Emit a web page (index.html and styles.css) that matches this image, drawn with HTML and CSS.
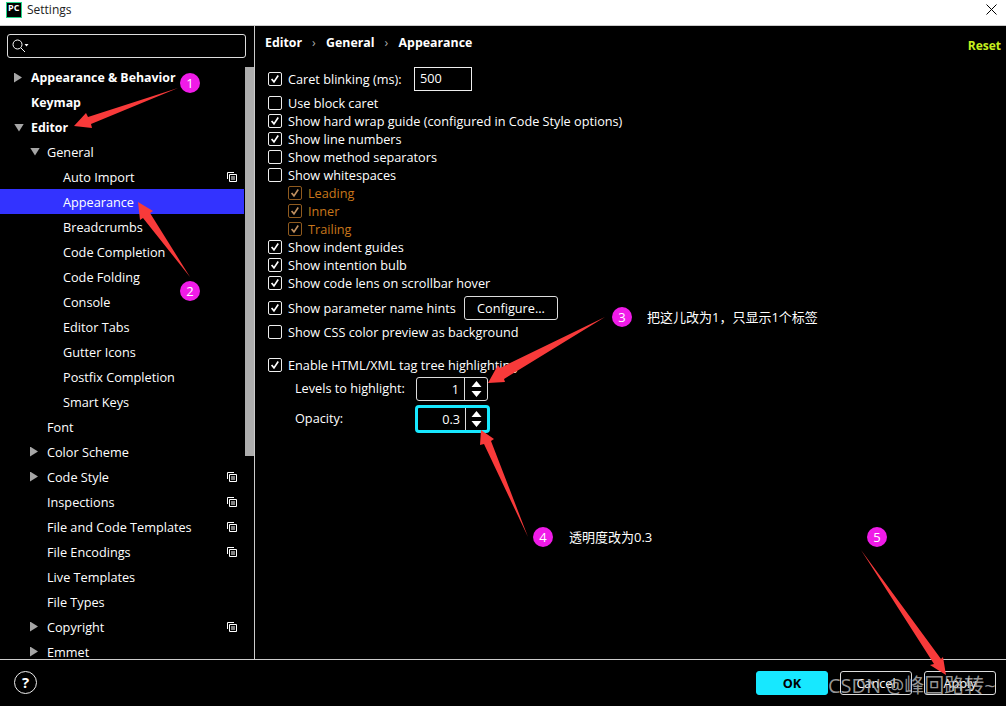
FILE: index.html
```html
<!DOCTYPE html>
<html lang="en">
<head>
  <meta charset="UTF-8" />
  <title>Settings</title>
  <link rel="stylesheet" href="styles.css">
</head>
<body>
  <svg class="defs" xmlns="http://www.w3.org/2000/svg">
    <symbol id="check" viewBox="0 0 13 13">
      <path d="M2.8 6.4 5.4 9.6 10 2.8" fill="none" stroke="currentColor" stroke-width="1.8"/>
    </symbol>
    <symbol id="project" viewBox="0 0 10 10">
      <path d="M.5 7V.5H7" fill="none" stroke="#fff"/>
      <path d="M2.5 2.5h7v7h-7zM4 5h4M4 7h4" fill="none" stroke="#fff"/>
    </symbol>
    <symbol id="updown" viewBox="0 0 11 16">
      <path d="M5.5 0 10.5 6H.5zM.5 10h10l-5 6z" fill="#fff"/>
    </symbol>
  </svg>

  <div class="window">
    <div class="titlebar">
      <div class="title-left">
        <div class="pc-logo"><span>PC</span></div>
        <span class="title-text">Settings</span>
      </div>
      <svg class="close" viewBox="0 0 11 11"><path d="M.5.5l10 10M10.5.5l-10 10" stroke="#000" fill="none"/></svg>
    </div>

    <div class="main">
      <div class="sidebar">
        <div class="tree-col">
          <div class="search">
            <svg class="search-icon" viewBox="0 0 17 14">
              <circle cx="5.5" cy="5.5" r="4.5" fill="none" stroke="#fff"/>
              <path d="M9 9l4 4" stroke="#fff" fill="none"/>
              <path d="M12.5 5h4l-2 2.5z" fill="#fff"/>
            </svg>
          </div>
          <div class="tree">
            <div class="node lv0 bold"><i class="arrow right"></i>Appearance &amp; Behavior</div>
            <div class="node lv0 bold"><i class="arrow"></i>Keymap</div>
            <div class="node lv0 bold"><i class="arrow down"></i>Editor</div>
            <div class="node lv1"><i class="arrow down"></i>General</div>
            <div class="node lv2">Auto Import<svg class="proj"><use href="#project"/></svg></div>
            <div class="node lv2 selected">Appearance</div>
            <div class="node lv2">Breadcrumbs</div>
            <div class="node lv2">Code Completion</div>
            <div class="node lv2">Code Folding</div>
            <div class="node lv2">Console</div>
            <div class="node lv2">Editor Tabs</div>
            <div class="node lv2">Gutter Icons</div>
            <div class="node lv2">Postfix Completion</div>
            <div class="node lv2">Smart Keys</div>
            <div class="node lv1"><i class="arrow"></i>Font</div>
            <div class="node lv1"><i class="arrow right"></i>Color Scheme</div>
            <div class="node lv1"><i class="arrow right"></i>Code Style<svg class="proj"><use href="#project"/></svg></div>
            <div class="node lv1"><i class="arrow"></i>Inspections<svg class="proj"><use href="#project"/></svg></div>
            <div class="node lv1"><i class="arrow"></i>File and Code Templates<svg class="proj"><use href="#project"/></svg></div>
            <div class="node lv1"><i class="arrow"></i>File Encodings<svg class="proj"><use href="#project"/></svg></div>
            <div class="node lv1"><i class="arrow"></i>Live Templates</div>
            <div class="node lv1"><i class="arrow"></i>File Types</div>
            <div class="node lv1"><i class="arrow right"></i>Copyright<svg class="proj"><use href="#project"/></svg></div>
            <div class="node lv1"><i class="arrow right"></i>Emmet</div>
          </div>
        </div>
        <div class="scrollbar"></div>
      </div>

      <div class="panel">
        <div class="panel-head">
          <div class="crumbs">
            <span>Editor</span><span>General</span><span>Appearance</span>
          </div>
          <span class="reset">Reset</span>
        </div>

        <div class="opt tall">
          <span class="box on"><svg><use href="#check"/></svg></span>
          <span class="label caret-label">Caret blinking (ms):</span>
          <div class="textbox">500</div>
        </div>
        <div class="opt gap3"><span class="box"></span>Use block caret</div>
        <div class="opt"><span class="box on"><svg><use href="#check"/></svg></span>Show hard wrap guide (configured in Code Style options)</div>
        <div class="opt"><span class="box on"><svg><use href="#check"/></svg></span>Show line numbers</div>
        <div class="opt"><span class="box"></span>Show method separators</div>
        <div class="opt"><span class="box"></span>Show whitespaces</div>
        <div class="opt sub"><span class="box on"><svg><use href="#check"/></svg></span>Leading</div>
        <div class="opt sub"><span class="box on"><svg><use href="#check"/></svg></span>Inner</div>
        <div class="opt sub"><span class="box on"><svg><use href="#check"/></svg></span>Trailing</div>
        <div class="opt"><span class="box on"><svg><use href="#check"/></svg></span>Show indent guides</div>
        <div class="opt"><span class="box on"><svg><use href="#check"/></svg></span>Show intention bulb</div>
        <div class="opt"><span class="box on"><svg><use href="#check"/></svg></span>Show code lens on scrollbar hover</div>
        <div class="opt tall gap4">
          <span class="box on"><svg><use href="#check"/></svg></span>
          <span class="label hints-label">Show parameter name hints</span>
          <div class="btn configure">Configure...</div>
        </div>
        <div class="opt gap3"><span class="box"></span>Show CSS color preview as background</div>
        <div class="opt gap15"><span class="box on"><svg><use href="#check"/></svg></span>Enable HTML/XML tag tree highlighting</div>
        <div class="field gap3">
          <span class="field-label">Levels to highlight:</span>
          <div class="spinner"><span class="value">1</span><span class="spin"><svg><use href="#updown"/></svg></span></div>
        </div>
        <div class="field gap4">
          <span class="field-label">Opacity:</span>
          <div class="spinner focus"><span class="value">0.3</span><span class="spin"><svg><use href="#updown"/></svg></span></div>
        </div>
      </div>
    </div>

    <div class="footer">
      <div class="help">?</div>
      <div class="buttons">
        <div class="btn ok">OK</div>
        <div class="btn">Cancel</div>
        <div class="btn">Apply</div>
      </div>
    </div>
  </div>

  <!-- annotations drawn on top of the dialog -->
  <svg class="marks" viewBox="0 0 1006 707" xmlns="http://www.w3.org/2000/svg">
    <polygon points="178,88 88,117 86,113 74,126 92,128 91,124"/>
    <polygon points="190,277 150,213 153,211 138,202 140,220 143,218"/>
    <polygon points="605,317 500,368 498,365 488,383 505,382 504,379"/>
    <polygon points="528,537 491,441 494,439 481,430 480,445 484,444"/>
    <polygon points="861,550 934,664 930,665 946,675 943,657 941,659"/>
  </svg>
  <div class="dot dot1">1</div>
  <div class="dot dot2">2</div>
  <div class="dot dot3">3</div>
  <div class="dot dot4">4</div>
  <div class="dot dot5">5</div>
  <div class="note note3">把这儿改为1，只显示1个标签</div>
  <div class="note note4">透明度改为0.3</div>
  <div class="watermark">CSDN @峰回路转~</div>
</body>
</html>
```

FILE: styles.css
```css
* {
  box-sizing: border-box;
}
body {
  margin: 0;
  width: 1006px;
  height: 707px;
  overflow: hidden;
  position: relative;
  background: #fff;
  font-family: 'Open Sans', 'Noto Sans CJK SC', sans-serif;
  font-size: 12.7px;
  color: #fff;
}
.defs {
  display: none;
}
.window {
  display: flex;
  flex-direction: column;
  height: 706px;
  background: #000;
}

/* title bar */
.titlebar {
  height: 26px;
  flex: none;
  display: flex;
  align-items: center;
  justify-content: space-between;
  padding: 0 9px 6px 6px;
  background: #fff;
  border-bottom: 1px solid #ccc;
  color: #222;
}
.title-left {
  display: flex;
  align-items: center;
  gap: 5px;
}
.pc-logo {
  width: 16px;
  height: 16px;
  background: #000;
  border: 1px solid #21d789;
  color: #fff;
  font-size: 9px;
  font-weight: bold;
  line-height: 10px;
  padding-left: 1px;
}
.title-text {
  font-size: 12px;
}
.close {
  width: 11px;
  height: 11px;
}

/* main split */
.main {
  flex: 1;
  display: flex;
  min-height: 0;
}
.sidebar {
  width: 255px;
  flex: none;
  display: flex;
  border-right: 1px solid #ccc;
  overflow: hidden;
}
.tree-col {
  width: 245px;
  flex: none;
}
.search {
  margin: 8px 0 6px 7px;
  width: 239px;
  height: 24px;
  border: 1px solid #ddd;
  border-radius: 3px;
  padding: 4px 0 0 4px;
}
.search-icon {
  display: block;
  width: 17px;
  height: 14px;
}
.node {
  height: 25px;
  width: 244px;
  display: flex;
  align-items: center;
  padding-right: 7px;
}
.lv0 { padding-left: 14px; }
.lv1 { padding-left: 30px; }
.lv2 { padding-left: 63px; }
.bold {
  font-weight: bold;
  font-size: 12.35px;
  padding-top: 2px;
}
.selected { background: #3333ff; }
.arrow {
  width: 17px;
  flex: none;
  height: 0;
}
.arrow.right {
  height: 10px;
  background: #a6a6a6;
  clip-path: polygon(0 0, 8px 5px, 0 10px);
}
.arrow.down {
  height: 8px;
  background: #a6a6a6;
  clip-path: polygon(0 0, 10px 0, 5px 8px);
}
.proj {
  width: 10px;
  height: 10px;
  margin-left: auto;
}
.scrollbar {
  width: 9px;
  height: 389px;
  margin-top: 41px;
  background: #adadad;
}

/* right panel */
.panel {
  flex: 1;
  padding: 0 0 0 13px;
  min-width: 0;
}
.panel-head {
  height: 41px;
  display: flex;
  justify-content: space-between;
  align-items: flex-start;
  font-weight: bold;
  font-size: 12.35px;
  padding-right: 5px;
}
.crumbs {
  display: flex;
  margin-left: -3px;
  padding-top: 8px;
}
.crumbs span + span {
  margin-left: 24px;
  position: relative;
}
.crumbs span + span::before {
  content: "›";
  position: absolute;
  left: -14px;
  color: #aaa;
  font-weight: normal;
}
.reset {
  color: #c6f01e;
  font-size: 12px;
  padding-top: 11px;
}
.opt {
  height: 18px;
  display: flex;
  align-items: center;
}
.opt.tall {
  height: 24px;
}
.gap3 { margin-top: 3px; }
.gap4 { margin-top: 4px; }
.gap15 { margin-top: 15px; }
.box {
  width: 14px;
  height: 14px;
  flex: none;
  margin-right: 6px;
  border: 1px solid #eee;
  border-radius: 2px;
  color: #fff;
}
.box svg {
  display: block;
  width: 12px;
  height: 12px;
}
.sub {
  padding-left: 20px;
  color: #c8761b;
}
.sub .box {
  border-color: #8f5a1e;
  color: #c09060;
}
.label {
  display: block;
  flex: none;
}
.caret-label { width: 126px; }
.hints-label { width: 176px; }
.textbox {
  width: 58px;
  height: 24px;
  border: 1px solid #eee;
  padding-left: 5px;
  line-height: 20px;
}
.btn {
  width: 72px;
  height: 24px;
  border: 1px solid #ddd;
  border-radius: 3px;
  text-align: center;
  line-height: 22px;
}
.btn.configure {
  width: 94px;
}
.field {
  display: flex;
  align-items: center;
  padding-left: 27px;
}
.field-label {
  width: 121px;
  flex: none;
  margin-top: -2px;
}
.spinner {
  width: 72px;
  height: 24px;
  display: flex;
  border: 1px solid #ddd;
  border-radius: 3px;
}
.spinner .value {
  width: 48px;
  text-align: right;
  padding-right: 5px;
  line-height: 22px;
  border-right: 1px solid #ddd;
}
.spin {
  flex: 1;
  display: flex;
  align-items: center;
  justify-content: center;
}
.spin svg {
  width: 11px;
  height: 16px;
}
.spinner.focus {
  width: 75px;
  height: 28px;
  margin-left: -1px;
  border: 3px solid #17e8ff;
  border-radius: 4px;
}

/* footer */
.footer {
  height: 47px;
  flex: none;
  border-top: 1px solid #ccc;
  display: flex;
  justify-content: space-between;
  padding: 11px 10px 0 14px;
}
.help {
  width: 23px;
  height: 23px;
  border: 1px solid #eee;
  border-radius: 50%;
  text-align: center;
  font-weight: bold;
  font-size: 15px;
  line-height: 21px;
}
.buttons {
  display: flex;
  gap: 12px;
}
.btn.ok {
  background: #17e8ff;
  border-color: #17e8ff;
  color: #000;
  font-weight: bold;
}

/* annotations */
.marks {
  position: absolute;
  left: 0;
  top: 0;
  width: 1006px;
  height: 707px;
  fill: #f83a3a;
}
.dot {
  position: absolute;
  width: 20px;
  height: 20px;
  border-radius: 50%;
  background: #f01be8;
  text-align: center;
  font-size: 13px;
  line-height: 20px;
}
.dot1 { left: 180px; top: 73px; }
.dot2 { left: 180px; top: 281px; }
.dot3 { left: 612px; top: 307px; }
.dot4 { left: 533px; top: 527px; }
.dot5 { left: 867px; top: 527px; }
.note {
  position: absolute;
  font-size: 13px;
  line-height: 16px;
}
.note3 { left: 647px; top: 309px; }
.note4 { left: 569px; top: 529px; }
.watermark {
  position: absolute;
  left: 828px;
  top: 673px;
  font-size: 20px;
  line-height: 26px;
  color: rgba(190, 190, 190, 0.8);
  white-space: nowrap;
}
```
